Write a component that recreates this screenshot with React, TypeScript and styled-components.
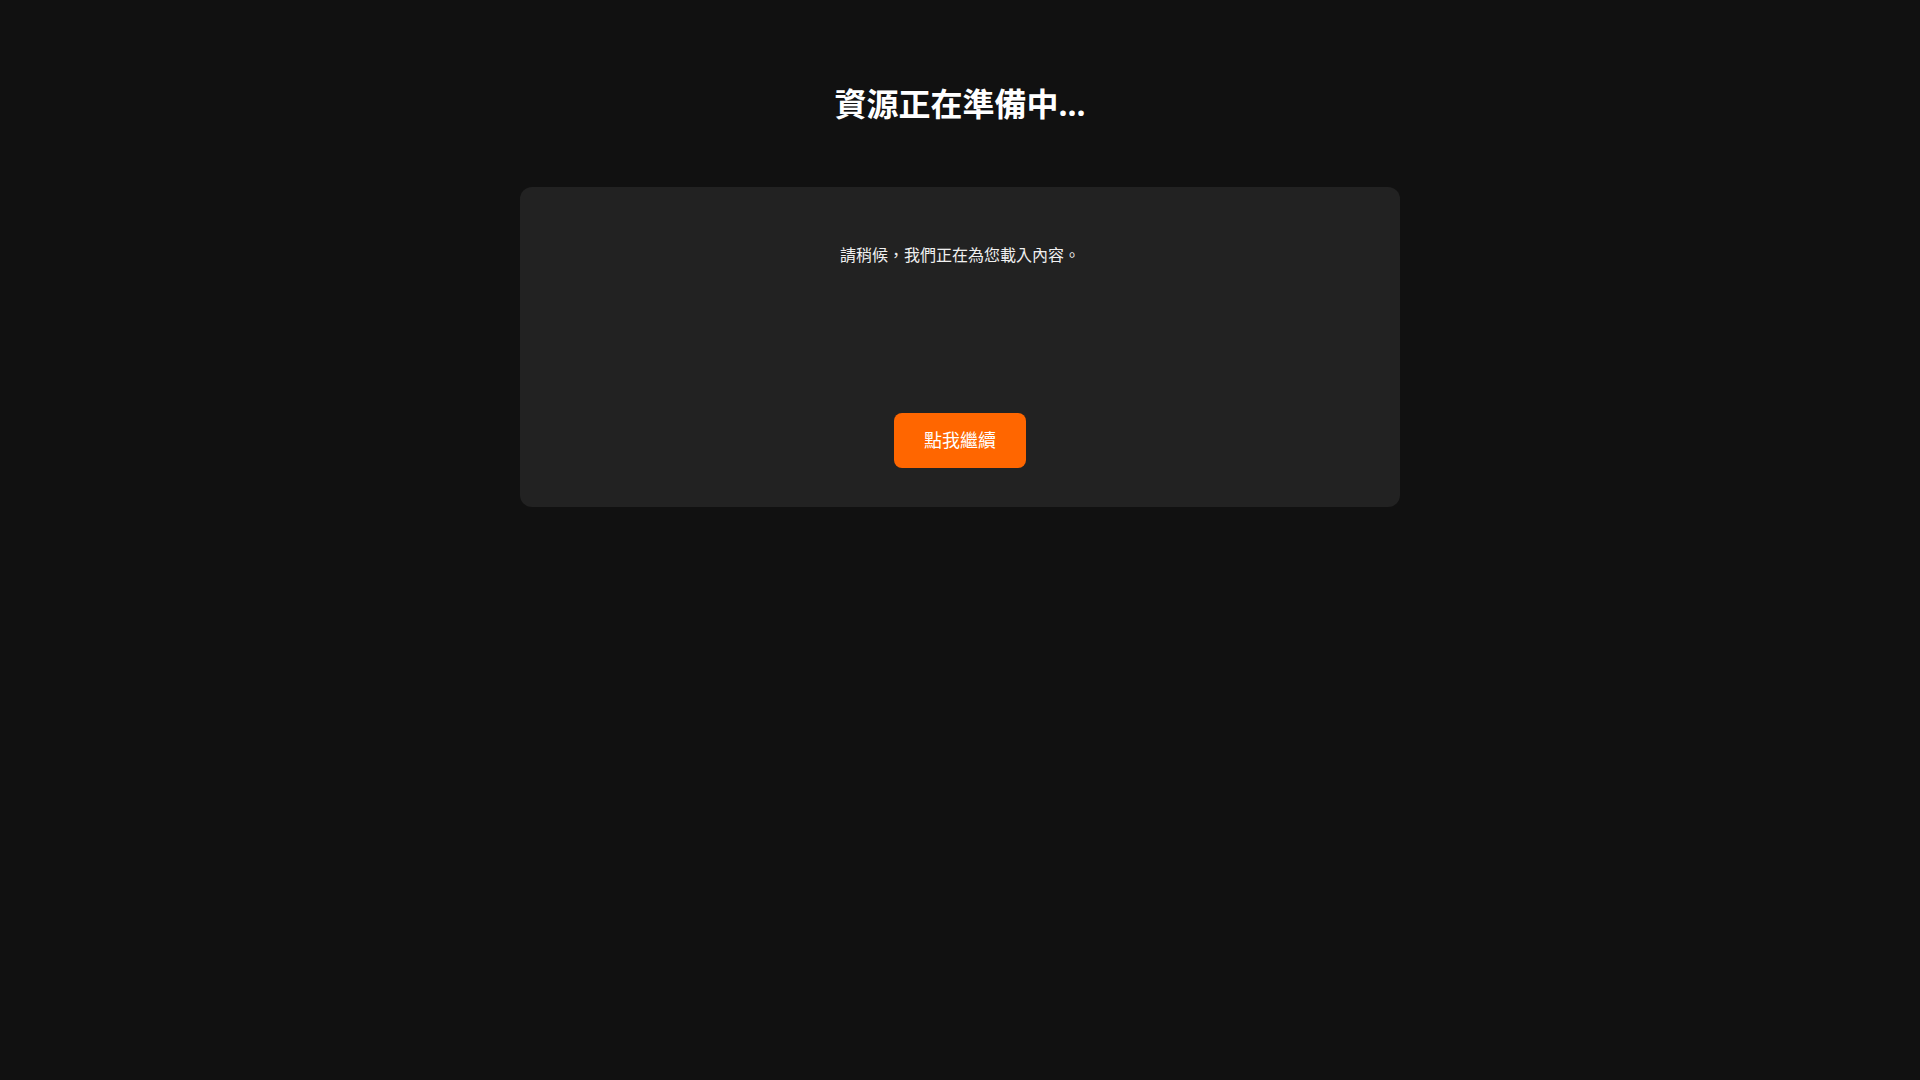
import styled, { createGlobalStyle } from "styled-components";

const GlobalStyle = createGlobalStyle`
  * {
    box-sizing: border-box;
  }
  body {
    margin: 0;
    background-color: #111111;
    color: #ffffff;
    font-family: "Noto Sans", "Noto Sans CJK TC", sans-serif;
  }
`;

const Page = styled.div`
  min-height: 100vh;
  display: flex;
  flex-direction: column;
  align-items: center;
  padding-top: 80px;
`;

const Title = styled.h1`
  margin: 0 0 59px;
  font-size: 32px;
  line-height: 48px;
  font-weight: 700;
  color: #ffffff;
`;

const Card = styled.div`
  width: 880px;
  display: flex;
  flex-direction: column;
  align-items: center;
  padding: 40px 40px 39px;
  background-color: #222222;
  border-radius: 12px;
`;

const Message = styled.p`
  margin: 16px 0;
  font-size: 16px;
  line-height: 24px;
  color: #f0f0f0;
`;

const LoaderArea = styled.div`
  height: 130px;
`;

const ContinueBtn = styled.button`
  font-family: inherit;
  font-size: 18px;
  line-height: 25px;
  padding: 15px 30px;
  color: #ffffff;
  background-color: #ff6600;
  border: none;
  border-radius: 8px;
  cursor: pointer;
  transition: opacity 0.2s ease-in-out;
  &:hover {
    opacity: 0.85;
  }
`;

function App() {
  return (
    <>
      <GlobalStyle />
      <Page>
        <Title>資源正在準備中...</Title>
        <Card>
          <Message>請稍候，我們正在為您載入內容。</Message>
          <LoaderArea />
          <ContinueBtn>點我繼續</ContinueBtn>
        </Card>
      </Page>
    </>
  );
}

export default App;
